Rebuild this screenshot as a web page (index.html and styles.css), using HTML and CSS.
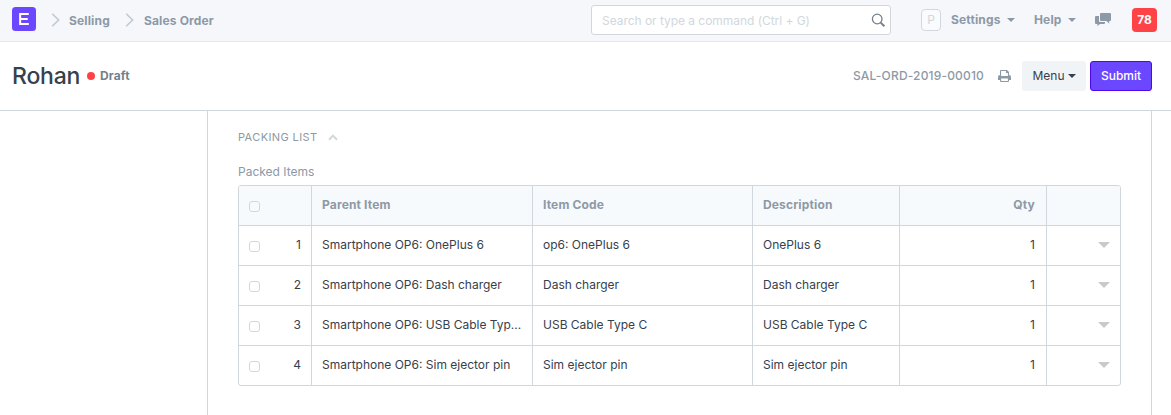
FILE: index.html
```html
<!DOCTYPE html>
<html lang="en">
<head>
<meta charset="utf-8">
<title>Rohan - Sales Order</title>
<link rel="stylesheet" href="styles.css">
</head>
<body>
<header class="navbar">
  <svg class="logo" width="24" height="24" viewBox="0 0 24 24"><rect width="24" height="24" rx="3.5" fill="#6b48ff"/><path d="M16.8 7.05H8.15v9.9h8.65M8.15 11.9h7.6" fill="none" stroke="#fff" stroke-width="2"/></svg>
  <svg class="crumb-arrow" width="9" height="14" viewBox="0 0 9 14"><path d="M1.2 .8 7.6 7 1.2 13.2"/></svg>
  <a class="crumb crumb-module">Selling</a>
  <svg class="crumb-arrow" width="9" height="14" viewBox="0 0 9 14"><path d="M1.2 .8 7.6 7 1.2 13.2"/></svg>
  <a class="crumb crumb-doctype">Sales Order</a>
  <div class="search">
    <span class="search-hint">Search or type a command (Ctrl + G)</span>
    <svg class="search-icon" width="15" height="15" viewBox="0 0 15 15"><circle cx="6.2" cy="6" r="4.8" fill="none" stroke="#74808b" stroke-width="1.3"/><path d="m9.7 9.6 3.7 3.6" stroke="#74808b" stroke-width="2"/></svg>
  </div>
  <span class="avatar">P</span>
  <a class="nav-link nav-settings">Settings</a><i class="caret"></i>
  <a class="nav-link nav-help">Help</a><i class="caret"></i>
  <svg class="chat" width="16" height="13" viewBox="0 0 16 13"><path fill="#8d99a6" d="M6 0h9q1 0 1 1v6q0 1-1 1h-.8v2.6L11.5 8H6Q5 8 5 7V1q0-1 1-1zM4 3v5q0 1 1 1h5v1q0 1-1 1H5l-2.6 2v-2H1q-1 0-1-1V4q0-1 1-1z"/></svg>
  <span class="badge">78</span>
</header>
<section class="page-head">
  <h1 class="title">Rohan</h1>
  <i class="dot"></i>
  <span class="status">Draft</span>
  <span class="doc-id">SAL-ORD-2019-00010</span>
  <svg class="printer" width="13" height="12" viewBox="0 0 13 12"><path fill="#8d99a6" fill-rule="evenodd" d="M2 5V1q0-1 1-1h6l2 2v3q2 0 2 2v3h-2v1q0 1-1 1H3q-1 0-1-1v-1H0V7q0-2 2-2zM3.100 1.100V6h6.800V3H8V1.100zM3.100 8.500v2.400h6.800V8.500z"/></svg>
  <button class="btn btn-menu"><span>Menu</span><i class="caret caret-dark"></i></button>
  <button class="btn btn-submit">Submit</button>
</section>
<main class="form">
  <div class="section-head"><span>PACKING LIST</span><svg width="10" height="7" viewBox="0 0 10 7"><path d="M1 5.800 5 1.600 9 5.800" fill="none" stroke="#d1d8dd" stroke-width="2"/></svg></div>
  <div class="label">Packed Items</div>
  <div class="grid">
    <div class="row head"><div class="cell index"><i class="check"></i></div><div class="cell">Parent Item</div><div class="cell">Item Code</div><div class="cell">Description</div><div class="cell num">Qty</div><div class="cell"></div></div>
    <div class="row"><div class="cell index"><i class="check"></i><span>1</span></div><div class="cell">Smartphone OP6: OnePlus 6</div><div class="cell">op6: OnePlus 6</div><div class="cell">OnePlus 6</div><div class="cell num">1</div><div class="cell open"><i class="down"></i></div></div>
    <div class="row"><div class="cell index"><i class="check"></i><span>2</span></div><div class="cell">Smartphone OP6: Dash charger</div><div class="cell">Dash charger</div><div class="cell">Dash charger</div><div class="cell num">1</div><div class="cell open"><i class="down"></i></div></div>
    <div class="row"><div class="cell index"><i class="check"></i><span>3</span></div><div class="cell">Smartphone OP6: USB Cable Typ...</div><div class="cell">USB Cable Type C</div><div class="cell">USB Cable Type C</div><div class="cell num">1</div><div class="cell open"><i class="down"></i></div></div>
    <div class="row"><div class="cell index"><i class="check"></i><span>4</span></div><div class="cell">Smartphone OP6: Sim ejector pin</div><div class="cell">Sim ejector pin</div><div class="cell">Sim ejector pin</div><div class="cell num">1</div><div class="cell open"><i class="down"></i></div></div>
  </div>
</main>
</body>
</html>
```

FILE: styles.css
```css
* { box-sizing: border-box; }
body {
  margin: 0;
  height: 415px;
  overflow: hidden;
  display: flex;
  flex-direction: column;
  background: #fff;
  color: #36414c;
  font: 12px/17px Inter, "Liberation Sans", sans-serif;
}
svg, i { flex: none; display: block; }

.navbar {
  flex: none;
  height: 42px;
  padding: 0 14px 2px 12px;
  display: flex;
  align-items: center;
  background: #f5f7fa;
  border-bottom: 1px solid #e4e9ee;
  color: #8d99a6;
  font-weight: 700;
  white-space: nowrap;
}
.logo { margin-top: -1px; }
.crumb-arrow { margin: 1px 0 0 15px; fill: none; stroke: #c0cad3; stroke-width: 1.6; }
.crumb { margin: 2px 0 0 9px; width: 41px; letter-spacing: .15px; }
.crumb-doctype { width: 72px; margin-left: 10px; }
.search {
  width: 300px;
  height: 30px;
  margin-left: auto;
  padding: 0 4px 0 10px;
  display: flex;
  align-items: center;
  justify-content: space-between;
  background: #fff;
  border: 1px solid #d1d8dd;
  border-radius: 3px;
  font-weight: 400;
  color: #d1d8dd;
}
.search-hint { margin-top: 1px; letter-spacing: -.04px; }
.search-icon { margin-top: 2px; }
.avatar {
  width: 20px;
  height: 22px;
  margin: 1px 10px 0 30px;
  border: 1px solid #d1d8dd;
  border-radius: 4px;
  background: #fafbfc;
  color: #d1d8dd;
  font-weight: 400;
  line-height: 20px;
  text-align: center;
}
.nav-link { letter-spacing: .15px; }
.nav-settings { width: 56px; }
.nav-help { width: 34px; margin-left: 19px; }
.caret { border: 4px solid transparent; border-top-color: #8d99a6; border-bottom: 0; margin-top: 1px; }
.chat { margin: 0 21px 0 19px; }
.badge {
  width: 25px;
  height: 24px;
  border-radius: 4px;
  background: #ff4246;
  color: #fff;
  line-height: 24px;
  text-align: center;
}

.page-head {
  flex: none;
  height: 69px;
  padding: 0 19px 0 12px;
  display: flex;
  align-items: center;
  border-bottom: 1px solid #d1d8dd;
}
.title { margin: 0; width: 75px; font-size: 23px; line-height: 32px; font-weight: 500; letter-spacing: -.2px; }
.dot { width: 8px; height: 8px; border-radius: 50%; background: #ff4246; }
.status { margin: -1px 0 0 5px; color: #74808b; font-weight: 700; letter-spacing: .15px; }
.doc-id { margin: -1px 0 0 auto; color: #8d99a6; font-weight: 500; letter-spacing: .17px; }
.printer { margin: 0 11px 0 14px; }
.btn {
  height: 30px;
  padding: 0 0 1px;
  display: flex;
  align-items: center;
  justify-content: center;
  border: 0;
  border-radius: 3px;
  font: inherit;
  color: #36414c;
}
.btn-menu { width: 64px; gap: 3px; background: #f0f4f7; }
.caret-dark { border-top-color: #36414c; margin-top: 1px; }
.btn-submit { width: 62px; margin-left: 4px; background: #6b48ff; border: 1px solid #4d08ef; color: #fff; font-weight: 500; }

.form {
  flex: 1;
  width: 945px;
  margin-left: 207px;
  padding: 18px 30px 0;
  border: 1px solid #d1d8dd;
  border-width: 0 1px;
}
.section-head {
  display: flex;
  align-items: center;
  gap: 10px;
  color: #8d99a6;
  font-size: 11px;
  letter-spacing: .4px;
}
.label { margin-top: 17px; color: #8d99a6; }
.grid { margin-top: 5px; width: 883px; border: 1px solid #d1d8dd; border-radius: 3px; overflow: hidden; }
.row { display: grid; grid-template-columns: 73px 221px 220px 147px 147px 73px; height: 40px; border-top: 1px solid #d1d8dd; }
.row.head { height: 39px; border-top: 0; background: #f7fafc; color: #8d99a6; font-weight: 700; letter-spacing: .15px; }
.cell { padding: 10px; border-right: 1px solid #d1d8dd; white-space: nowrap; overflow: hidden; }
.cell:last-child { border-right: 0; }
.cell.num { padding-right: 11px; text-align: right; }
.index { display: flex; justify-content: space-between; }
.check { width: 11px; height: 11px; margin-top: 5px; border: 1px solid #d1d8dd; border-radius: 3px; }
.open { display: flex; justify-content: flex-end; align-items: center; }
.down { margin-top: -2px; border: 6px solid transparent; border-top-color: #c9c9c9; border-bottom: 0; }
```
